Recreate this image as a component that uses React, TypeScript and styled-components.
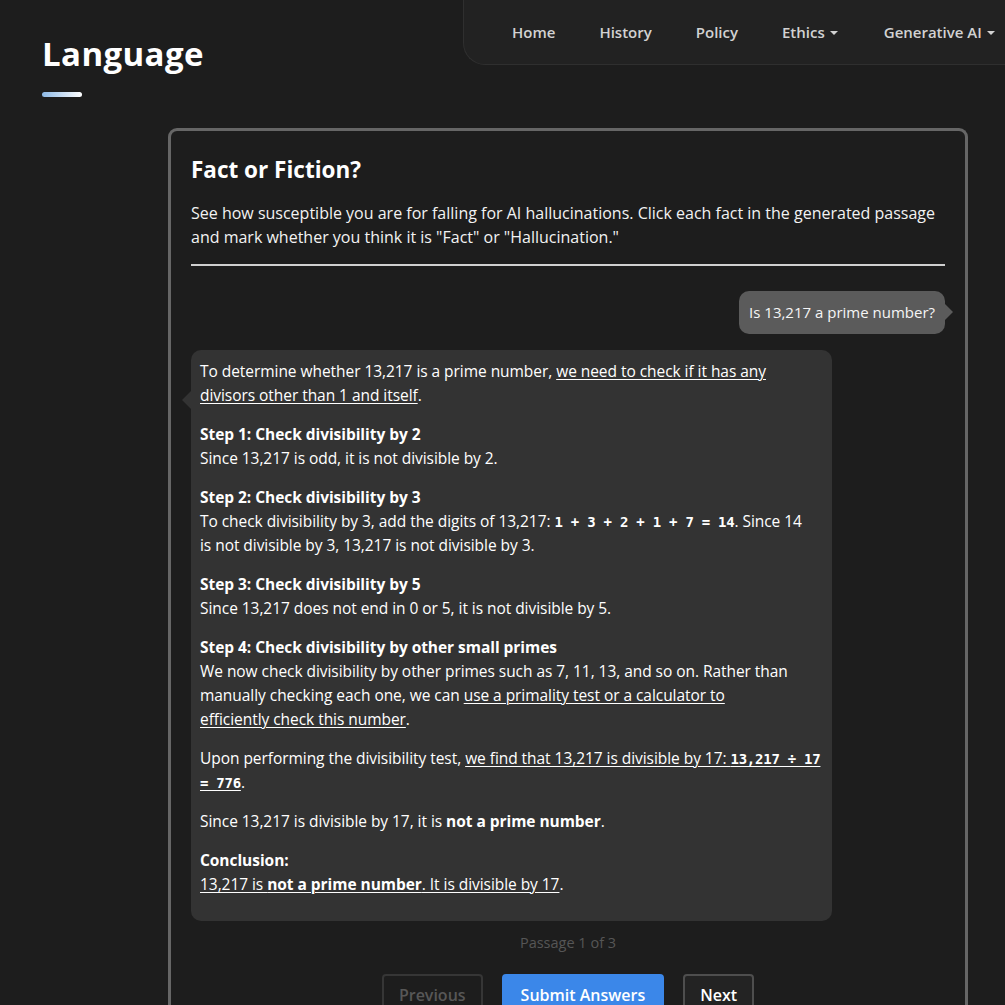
import React from "react";
import styled, { createGlobalStyle } from "styled-components";

const GlobalStyle = createGlobalStyle`
  html, body {
    margin: 0;
    padding: 0;
    background: #1d1d1d;
    color: #ffffff;
    font-family: "Open Sans", "Noto Sans", sans-serif;
    overflow-x: hidden;
  }
  * { box-sizing: border-box; }
`;

const Page = styled.div`
  width: 1005px;
  min-height: 1005px;
  overflow: hidden;
`;

const Header = styled.header`
  display: flex;
  align-items: flex-start;
  justify-content: space-between;
  height: 128px;
`;

const TitleBlock = styled.div`
  padding: 30px 0 0 42px;
`;

const PageTitle = styled.h1`
  margin: 0;
  font-size: 33px;
  font-weight: 700;
  letter-spacing: 0.4px;
  line-height: 48px;
  color: #fff;
`;

const TitleBar = styled.div`
  margin-top: 14px;
  width: 40px;
  height: 5px;
  border-radius: 3px;
  background: linear-gradient(90deg, #8db9e6, #ffffff);
`;

const Nav = styled.nav`
  display: flex;
  align-items: center;
  height: 65px;
  margin-left: auto;
  width: 542px;
  flex-shrink: 0;
  padding-left: 26px;
  background: #222222;
  border: 1px solid #2f2f2f;
  border-top: none;
  border-right: none;
  border-bottom-left-radius: 22px;
  white-space: nowrap;
`;

const NavItem = styled.a<{ $pad?: number }>`
  display: inline-flex;
  align-items: center;
  gap: 5px;
  padding: 0 ${(p) => p.$pad ?? 22}px;
  font-size: 15px;
  font-weight: 600;
  color: #d2d2d2;
  text-decoration: none;
`;

const Caret = styled.span`
  display: inline-block;
  width: 0;
  height: 0;
  border-left: 4px solid transparent;
  border-right: 4px solid transparent;
  border-top: 4px solid #d2d2d2;
  margin-top: 2px;
`;

const Card = styled.section`
  margin-left: 168px;
  width: 800px;
  border: 3px solid #666666;
  border-bottom: none;
  border-radius: 9px 9px 0 0;
  padding: 20px 20px 0 20px;
  min-height: 877px;
`;

const CardTitle = styled.h2`
  margin: 3px 0 0 0;
  font-size: 22.5px;
  font-weight: 700;
  line-height: 32px;
`;

const Description = styled.p`
  margin: 15px 0 0 0;
  font-size: 16px;
  line-height: 24px;
  color: #f2f2f2;
`;

const Rule = styled.hr`
  margin: 15px 0 0 0;
  border: none;
  border-top: 2px solid #cfcfcf;
`;

const Chat = styled.div`
  display: flex;
  flex-direction: column;
  gap: 16px;
  margin-top: 25px;
`;

const UserBubble = styled.div`
  position: relative;
  align-self: flex-end;
  max-width: 85%;
  background: #5b5b5b;
  border-radius: 10px;
  padding: 9px 10px 10px 10px;
  font-size: 15px;
  line-height: 24px;
  color: #f5f5f5;
  &::after {
    content: "";
    position: absolute;
    right: -8px;
    top: 13px;
    border-top: 8px solid transparent;
    border-bottom: 8px solid transparent;
    border-left: 8px solid #5b5b5b;
  }
`;

const BotBubble = styled.div`
  position: relative;
  align-self: flex-start;
  width: 85%;
  background: #333333;
  border-radius: 10px;
  padding: 9px 9px 10px 9px;
  font-size: 15.5px;
  letter-spacing: -0.05px;
  line-height: 24px;
  color: #ffffff;
  &::before {
    content: "";
    position: absolute;
    left: -9px;
    top: 41px;
    border-top: 9px solid transparent;
    border-bottom: 9px solid transparent;
    border-right: 9px solid #333333;
  }
`;

const Para = styled.p`
  margin: 0 0 15px 0;
`;

const Claim = styled.span`
  text-decoration: underline;
  text-underline-offset: 2px;
  text-decoration-thickness: 1px;
  cursor: pointer;
`;

const Code = styled.code`
  font-family: "DejaVu Sans Mono", "Liberation Mono", monospace;
  font-weight: 700;
  font-size: 14px;
  letter-spacing: -0.25px;
  line-height: 1;
`;

const Footer = styled.div`
  display: flex;
  flex-direction: column;
  align-items: center;
  margin-top: 11px;
`;

const PassageLabel = styled.div`
  font-size: 14.5px;
  line-height: 22px;
  color: #565656;
`;

const ButtonRow = styled.div`
  display: flex;
  gap: 19px;
  margin-top: 20px;
`;

const Button = styled.button<{ $variant: "ghost" | "primary" | "outline" }>`
  font-family: inherit;
  font-size: 16px;
  font-weight: 600;
  height: 42px;
  padding: 0 ${(p) => (p.$variant === "primary" ? 17 : 15)}px;
  border-radius: 4px;
  cursor: pointer;
  border: 2px solid
    ${(p) =>
      p.$variant === "primary" ? "#3b87e9" : p.$variant === "ghost" ? "#363636" : "#4e4e4e"};
  background: ${(p) =>
    p.$variant === "primary" ? "#3b87e9" : p.$variant === "ghost" ? "#1d1d1d" : "#232323"};
  color: ${(p) => (p.$variant === "ghost" ? "#575757" : "#ffffff")};
`;

export default function App() {
  return (
    <Page>
      <GlobalStyle />
      <Header>
        <TitleBlock>
          <PageTitle>Language</PageTitle>
          <TitleBar />
        </TitleBlock>
        <Nav>
          <NavItem href="#">Home</NavItem>
          <NavItem href="#">History</NavItem>
          <NavItem href="#">Policy</NavItem>
          <NavItem href="#">
            Ethics <Caret />
          </NavItem>
          <NavItem href="#" $pad={24}>
            Generative AI <Caret />
          </NavItem>
        </Nav>
      </Header>

      <Card>
        <CardTitle>Fact or Fiction?</CardTitle>
        <Description>
          See how susceptible you are for falling for AI hallucinations. Click each fact in the
          generated passage and mark whether you think it is "Fact" or "Hallucination."
        </Description>
        <Rule />

        <Chat>
          <UserBubble>Is 13,217 a prime number?</UserBubble>
          <BotBubble>
            <Para>
              To determine whether 13,217 is a prime number,{" "}
              <Claim>we need to check if it has any divisors other than 1 and itself</Claim>.
            </Para>
            <Para>
              <strong>Step 1: Check divisibility by 2</strong>
              <br />
              Since 13,217 is odd, it is not divisible by 2.
            </Para>
            <Para>
              <strong>Step 2: Check divisibility by 3</strong>
              <br />
              To check divisibility by 3, add the digits of 13,217:{" "}
              <Code>1 + 3 + 2 + 1 + 7 = 14</Code>. Since 14
              <br />
              is not divisible by 3, 13,217 is not divisible by 3.
            </Para>
            <Para>
              <strong>Step 3: Check divisibility by 5</strong>
              <br />
              Since 13,217 does not end in 0 or 5, it is not divisible by 5.
            </Para>
            <Para>
              <strong>Step 4: Check divisibility by other small primes</strong>
              <br />
              We now check divisibility by other primes such as 7, 11, 13, and so on. Rather than
              manually checking each one, we can{" "}
              <Claim>
                use a primality test or a calculator to
                <br />
                efficiently check this number
              </Claim>
              .
            </Para>
            <Para>
              Upon performing the divisibility test,{" "}
              <Claim>
                we find that 13,217 is divisible by 17: <Code>13,217 ÷ 17 = 776</Code>
              </Claim>
              .
            </Para>
            <Para>
              Since 13,217 is divisible by 17, it is <strong>not a prime number</strong>.
            </Para>
            <Para>
              <strong>Conclusion:</strong>
              <br />
              <Claim>
                13,217 is <strong>not a prime number</strong>. It is divisible by 17
              </Claim>
              .
            </Para>
          </BotBubble>
        </Chat>

        <Footer>
          <PassageLabel>Passage 1 of 3</PassageLabel>
          <ButtonRow>
            <Button $variant="ghost">Previous</Button>
            <Button $variant="primary">Submit Answers</Button>
            <Button $variant="outline">Next</Button>
          </ButtonRow>
        </Footer>
      </Card>
    </Page>
  );
}
